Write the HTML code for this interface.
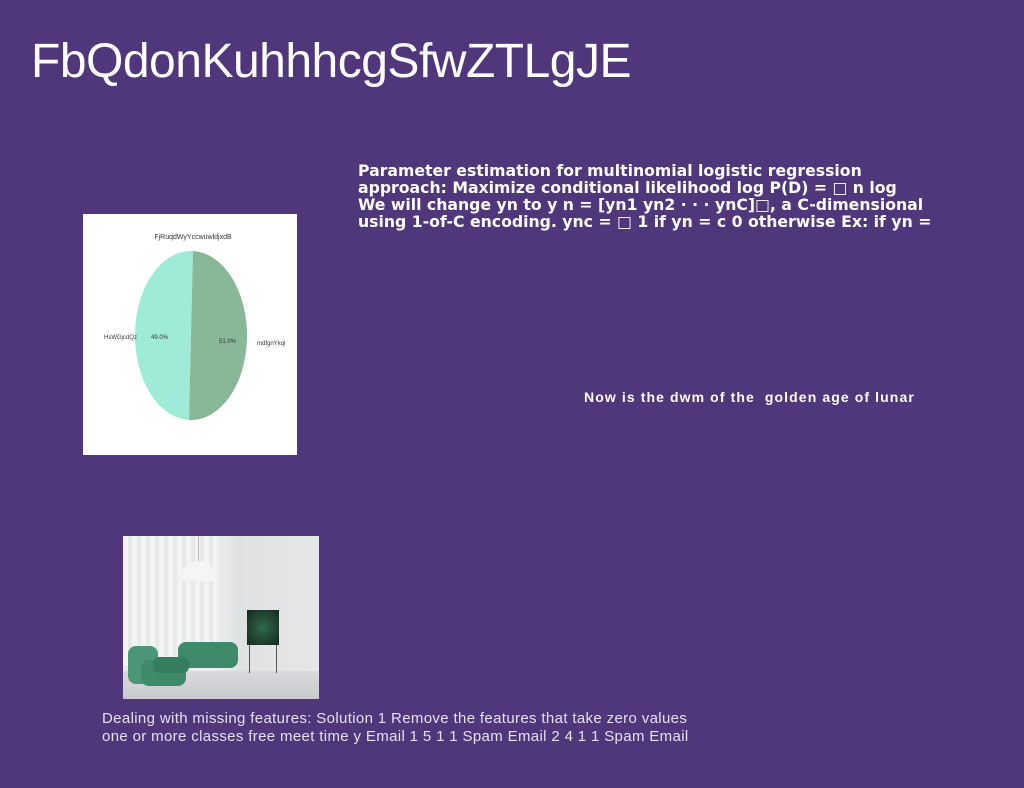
<!DOCTYPE html>
<html><head><meta charset="utf-8"><style>
html,body{margin:0;padding:0}
body{width:1024px;height:788px;background:#50367a;position:relative;overflow:hidden;font-family:"Liberation Sans",sans-serif;color:#fff}
.a{position:absolute;white-space:nowrap}
</style></head><body>
<div class="a" style="left:31px;top:34px;font-size:48px;font-weight:normal;letter-spacing:-0.5px;line-height:56px">FbQdonKuhhhcgSfwZTLgJE</div>
<div class="a" style="left:358px;top:162px;font-family:'DejaVu Sans',sans-serif;font-weight:bold;font-size:15.7px;line-height:17px">Parameter estimation for multinomial logistic regression<br>approach: Maximize conditional likelihood log P(D) = □ n log<br>We will change yn to y n = [yn1 yn2 · · · ynC]□, a C-dimensional<br>using 1-of-C encoding. ync = □ 1 if yn = c 0 otherwise Ex: if yn =</div>
<div class="a" style="left:83px;top:214px;width:214px;height:241px;background:#fff">
<svg width="214" height="241" viewBox="0 0 214 241">
<text x="110" y="25" font-size="7" text-anchor="middle" fill="#333" font-family="Liberation Sans">FjRuqdWyYccwuwldjxdB</text>
<path d="M110 37 A56 84.5 0 0 0 106 206 Z" fill="#9eebd8"/>
<path d="M110 37 A56 84.5 0 0 1 106 206 Z" fill="#88b898"/>
<text x="21" y="125" font-size="6" fill="#333" font-family="Liberation Sans">HsWGjcdQz</text>
<text x="68" y="125" font-size="6" fill="#333" font-family="Liberation Sans">49.0%</text>
<text x="136" y="129" font-size="6" fill="#333" font-family="Liberation Sans">51.0%</text>
<text x="174" y="131" font-size="6" fill="#333" font-family="Liberation Sans">mdfgnYkql</text>
</svg></div>
<div class="a" style="left:584px;top:388px;font-size:14px;font-weight:bold;letter-spacing:1.1px;line-height:18px">Now is the dwm of the&nbsp; golden age of lunar</div>
<div class="a" style="left:123px;top:536px;width:196px;height:163px;overflow:hidden;background:linear-gradient(90deg,#e6e8ea 0%,#eef0f1 45%,#dfe1e3 60%,#e5e7e8 100%)">
<div style="position:absolute;left:0;top:0;width:95px;height:130px;background:repeating-linear-gradient(90deg,#f2f3f4 0 5px,#e6e8ea 5px 9px)"></div>
<div style="position:absolute;left:0;top:135px;width:196px;height:28px;background:linear-gradient(#d8dadc,#c8cacd)"></div>
<div style="position:absolute;left:57px;top:25px;width:36px;height:20px;background:#f4f5f6;border-radius:18px 18px 2px 2px"></div>
<div style="position:absolute;left:75px;top:0;width:1px;height:25px;background:#bbb"></div>
<div style="position:absolute;left:124px;top:74px;width:32px;height:35px;background:radial-gradient(#2f6a4a,#15271d)"></div>
<div style="position:absolute;left:126px;top:109px;width:1px;height:28px;background:#555"></div>
<div style="position:absolute;left:153px;top:109px;width:1px;height:28px;background:#555"></div>
<div style="position:absolute;left:55px;top:106px;width:60px;height:26px;background:#3f8a6a;border-radius:8px"></div>
<div style="position:absolute;left:5px;top:110px;width:30px;height:38px;background:#4a9676;border-radius:8px"></div>
<div style="position:absolute;left:18px;top:124px;width:45px;height:26px;background:#3e8a6a;border-radius:8px"></div>
<div style="position:absolute;left:30px;top:121px;width:36px;height:16px;background:#357e5f;border-radius:6px"></div>
</div>
<div class="a" style="left:102px;top:710px;font-size:15px;letter-spacing:0.35px;line-height:18px;color:#e6e1ef">Dealing with missing features: Solution 1 Remove the features that take zero values<br>one or more classes free meet time y Email 1 5 1 1 Spam Email 2 4 1 1 Spam Email</div>
</body></html>
